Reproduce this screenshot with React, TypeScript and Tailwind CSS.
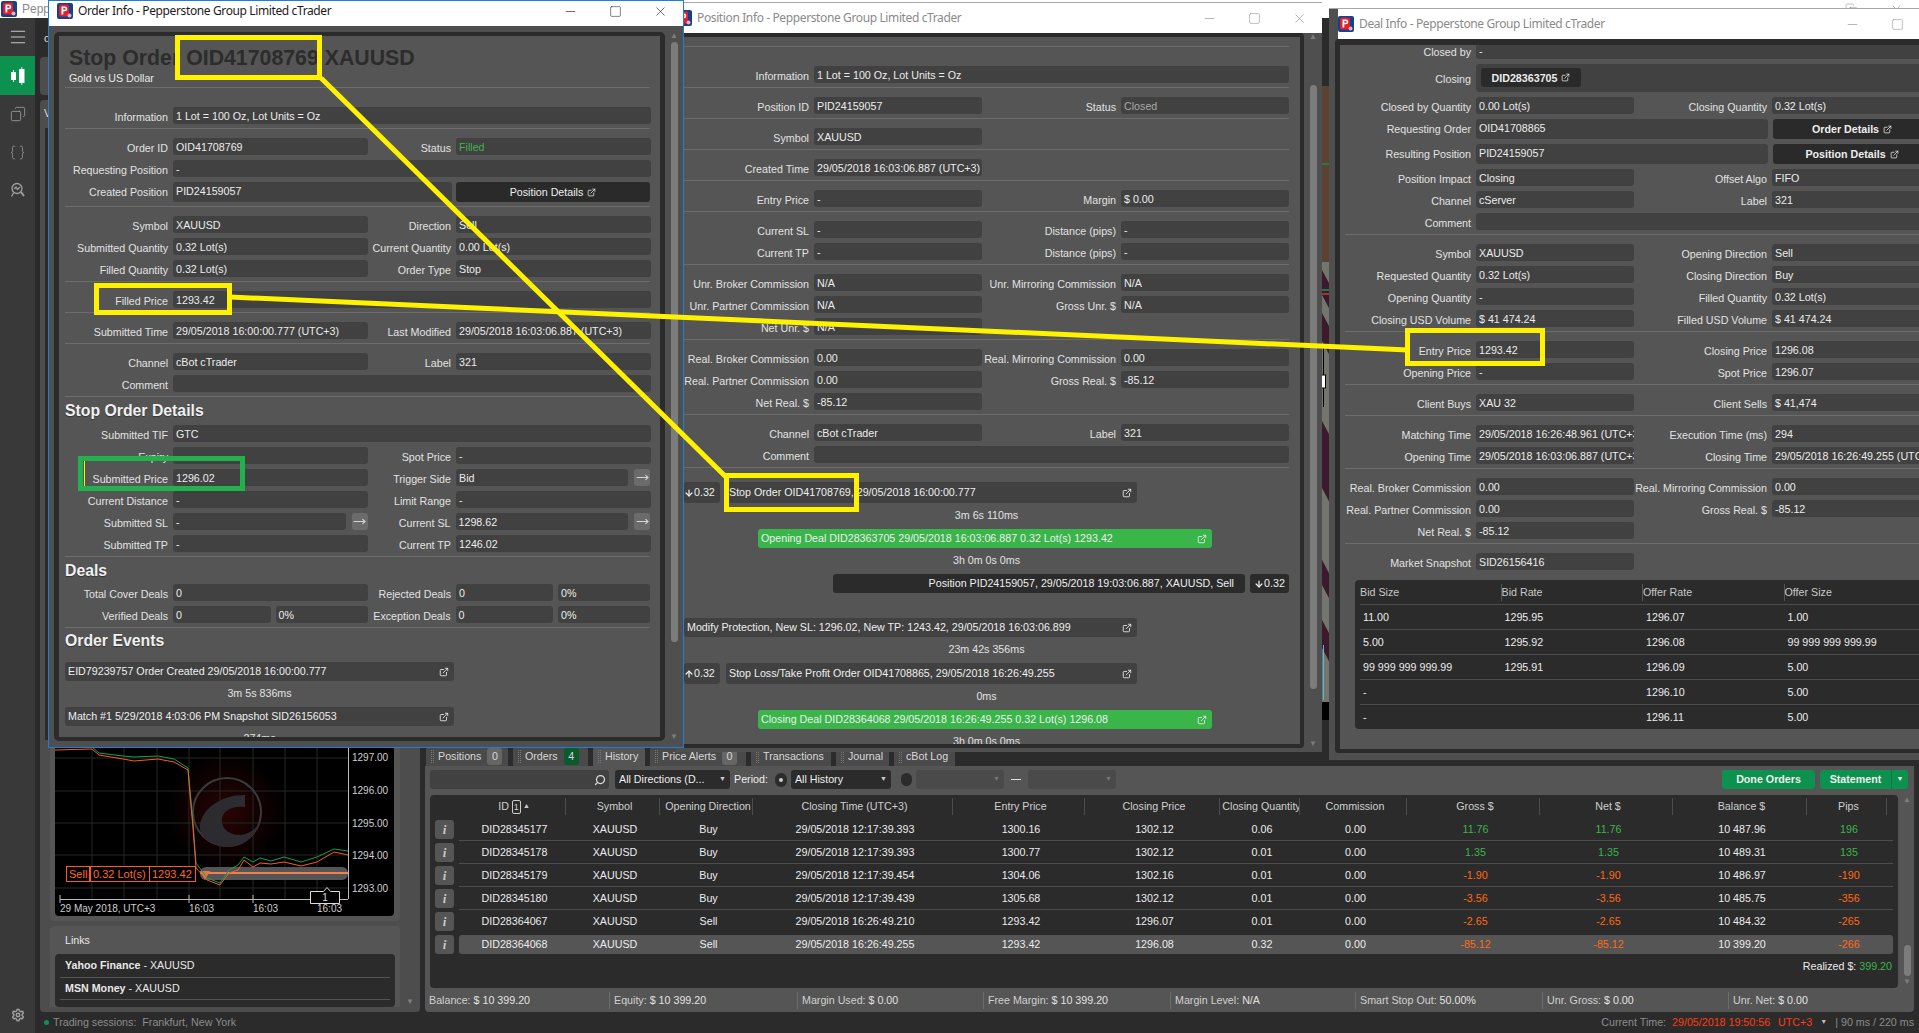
import React from 'react';
import clsx from 'clsx';
import { Minus, Square, X, Copy, Menu, Braces, Settings, ExternalLink, MoveRight, ArrowDown, ArrowUp, Search } from 'lucide-react';

type Layout = { l1: string; f1: string; l2: string; f2: string; full: string };
const ORDER: Layout = { l1: 'w-[103px]', f1: 'w-[195px]', l2: 'w-[83px]', f2: 'w-[195px]', full: 'w-[478px]' };
const POSITION: Layout = { l1: 'w-[125px]', f1: 'w-[168px]', l2: 'w-[134px]', f2: 'w-[168px]', full: 'w-[475px]' };
const DEAL: Layout = { l1: 'w-[126px]', f1: 'w-[158px]', l2: 'w-[133px]', f2: 'w-[158px]', full: 'w-[455px]' };

function Logo() {
  return (
    <svg viewBox="0 0 16 16" className="w-4 h-4 shrink-0">
      <rect width="16" height="16" rx="2" fill="#12418f" />
      <rect x="2" y="1.5" width="10" height="12" rx="1.5" fill="#e3202c" />
      <path d="M4.5 3.5h3.4a2.4 2.4 0 0 1 0 4.8H6.3v3.2H4.5z M6.3 5v1.8h1.4a.9.9 0 0 0 0-1.8z" fill="#fff" fillRule="evenodd" />
      <circle cx="12.5" cy="12.5" r="2" fill="#f3b0b0" />
    </svg>
  );
}

function Label({ className, children }: { className: string; children?: React.ReactNode }) {
  return <div className={clsx('shrink-0 text-right whitespace-nowrap text-[#e2e2e2] pt-[2px] leading-[17px]', className)}>{children}</div>;
}

function Field({ className, children, h = 'h-[17px]' }: { className?: string; children?: React.ReactNode; h?: string }) {
  return (
    <div className={clsx('shrink-0 overflow-hidden whitespace-nowrap rounded-[3px] bg-[#414141] pl-[3px] leading-[18px] text-[#ececec]', h, className)}>
      {children}
    </div>
  );
}

function ArrowBtn() {
  return (
    <div className="ml-[6px] flex h-[17px] w-[16px] shrink-0 items-center justify-center rounded-[3px] bg-[#6b6b6b]">
      <MoveRight size={13} className="text-[#d5d5d5]" />
    </div>
  );
}

type RowProps = {
  w: Layout;
  a: string;
  b?: React.ReactNode;
  c?: string;
  d?: React.ReactNode;
  full?: boolean;
  bArrow?: boolean;
  dArrow?: boolean;
  bSplit?: string;
  dSplit?: string;
};

function Row({ w, a, b, c, d, full, bArrow, dArrow, bSplit, dSplit }: RowProps) {
  return (
    <div className="flex h-[17px]">
      <Label className={w.l1}>{a}</Label>
      <div className="ml-[5px]" />
      {full ? (
        <Field className={w.full}>{b}</Field>
      ) : bArrow ? (
        <div className={clsx('flex', w.f1)}>
          <Field className="flex-1">{b}</Field>
          <ArrowBtn />
        </div>
      ) : bSplit ? (
        <div className={clsx('flex gap-[5px]', w.f1)}>
          <Field className="flex-1">{b}</Field>
          <Field className="w-[92px]">{bSplit}</Field>
        </div>
      ) : (
        <Field className={w.f1}>{b}</Field>
      )}
      {c && <Label className={w.l2}>{c}</Label>}
      {c && <div className="ml-[5px]" />}
      {c &&
      (dArrow ? (
        <div className={clsx('flex', w.f2)}>
          <Field className="flex-1">{d}</Field>
          <ArrowBtn />
        </div>
      ) : dSplit ? (
        <div className={clsx('flex gap-[5px]', w.f2)}>
          <Field className="flex-1">{d}</Field>
          <Field className="w-[92px]">{dSplit}</Field>
        </div>
      ) : (
        <Field className={w.f2}>{d}</Field>
      ))}
    </div>
  );
}

function Section({ children, first, last }: { children: React.ReactNode; first?: boolean; last?: boolean }) {
  return (
    <div className={clsx('flex flex-col gap-[5px] pb-[4px]', first ? 'pt-[19px]' : 'pt-[9px]', !last && 'border-b border-[#6c6c6c]')}>
      {children}
    </div>
  );
}

function TitleBar({ title, inactive, h }: { title: string; inactive?: boolean; h: string }) {
  const tone = inactive ? 'text-[#8a8a8a]' : 'text-[#1c1c1c]';
  return (
    <div className={clsx('flex shrink-0 items-center bg-white', h)}>
      <Logo />
      <div className={clsx('ml-[5px] flex-1 whitespace-nowrap text-[12px] font-[Noto_Sans] tracking-[-0.38px]', tone)}>{title}</div>
      {[Minus, Square, X].map((Icon, i) =>
      <div key={i} className={clsx('flex h-full w-[45px] items-center justify-center', tone)}>
          <Icon size={i === 1 ? 13 : 15} strokeWidth={1} />
        </div>
      )}
    </div>
  );
}

function Scroll({ className, thumb }: { className: string; thumb: string }) {
  return (
    <div className={clsx('flex w-[19px] flex-col items-center text-[8px] leading-[8px] text-[#7d7d7d]', className)}>
      <span>▲</span>
      <div className={clsx('w-[7px] rounded-full bg-[#7c7c7c]', thumb)} />
      <div className="flex-1" />
      <span>▼</span>
    </div>
  );
}

function EventBox({ children, className }: { children: React.ReactNode; className: string }) {
  return (
    <div className={clsx('flex h-[19px] shrink-0 items-center rounded-[3px] pl-[3px] pr-[5px] whitespace-nowrap', className)}>
      <span className="flex-1">{children}</span>
      <ExternalLink size={10} strokeWidth={2} />
    </div>
  );
}

function Gap({ children }: { children: string }) {
  return <div className="h-[26px] shrink-0 text-center leading-[25px] text-[#e2e2e2]">{children}</div>;
}

function Heading({ h, children }: { h: string; children: string }) {
  return <div className={clsx('flex items-center text-[15.8px] font-bold text-[#f0f0f0] [text-shadow:0_1px_1px_#333]', h)}>{children}</div>;
}

function OrderWindow() {
  const w = ORDER;
  return (
    <div className="absolute left-[48px] top-0 z-30 flex h-[748px] w-[636px] flex-col border border-[#1f7fd6] bg-[#4f4f4f]">
      <div className="bg-white pb-[5px] pl-[8px]"><TitleBar title="Order Info - Pepperstone Group Limited cTrader" h="h-[20px]" /></div>
      <div className="flex min-h-0 flex-1 bg-[#4f4f4f] pl-[5px] pt-[6px]">
        <div className="h-[709px] w-[611px] shrink-0 overflow-hidden rounded-[5px] border-x-[5px] border-y-[4px] border-[#2b2b2b] bg-[#555555]">
          <div className="pl-[6px] pr-[10px]">
            <div className="h-[52px] border-b border-[#6c6c6c] pl-[4px] pt-[10px]">
              <div className="whitespace-nowrap text-[21.3px] font-bold leading-[24px] text-[#2c2c2c]">Stop Order OID41708769 XAUUSD</div>
              <div className="mt-[1px] leading-[14px] text-[#e8e8e8]">Gold vs US Dollar</div>
            </div>
            <Section first><Row w={w} full a="Information" b="1 Lot = 100 Oz, Lot Units = Oz" /></Section>
            <Section>
              <Row w={w} a="Order ID" b="OID41708769" c="Status" d={<span className="text-[#3fb54b]">Filled</span>} />
              <Row w={w} full a="Requesting Position" b="-" />
              <div className="flex h-[20px]">
                <Label className={w.l1}>Created Position</Label>
                <div className="ml-[5px]" />
                <Field className="w-[279px]" h="h-[20px]">PID24159057</Field>
                <div className="ml-[4px] flex h-[20px] w-[195px] items-center justify-center gap-[4px] rounded-[3px] bg-[#2a2a2a] text-[#eee]">
                  Position Details <ExternalLink size={9} />
                </div>
              </div>
            </Section>
            <Section>
              <Row w={w} a="Symbol" b="XAUUSD" c="Direction" d="Sell" />
              <Row w={w} a="Submitted Quantity" b="0.32 Lot(s)" c="Current Quantity" d="0.00 Lot(s)" />
              <Row w={w} a="Filled Quantity" b="0.32 Lot(s)" c="Order Type" d="Stop" />
            </Section>
            <Section><Row w={w} full a="Filled Price" b="1293.42" /></Section>
            <Section><Row w={w} a="Submitted Time" b="29/05/2018 16:00:00.777 (UTC+3)" c="Last Modified" d="29/05/2018 16:03:06.887 (UTC+3)" /></Section>
            <Section>
              <Row w={w} a="Channel" b="cBot cTrader" c="Label" d="321" />
              <Row w={w} full a="Comment" />
            </Section>
            <Heading h="h-[28px]">Stop Order Details</Heading>
            <div className="flex flex-col gap-[5px] border-b border-[#6c6c6c] pb-[4px]">
              <Row w={w} full a="Submitted TIF" b="GTC" />
              <Row w={w} a="Expiry" b="-" c="Spot Price" d="-" />
              <Row w={w} a="Submitted Price" b="1296.02" c="Trigger Side" d="Bid" dArrow />
              <Row w={w} a="Current Distance" b="-" c="Limit Range" d="-" />
              <Row w={w} a="Submitted SL" b="-" bArrow c="Current SL" d="1298.62" dArrow />
              <Row w={w} a="Submitted TP" b="-" c="Current TP" d="1246.02" />
            </div>
            <Heading h="h-[27px]">Deals</Heading>
            <div className="flex flex-col gap-[5px] border-b border-[#6c6c6c] pb-[4px]">
              <Row w={w} a="Total Cover Deals" b="0" c="Rejected Deals" d="0" dSplit="0%" />
              <Row w={w} a="Verified Deals" b="0" bSplit="0%" c="Exception Deals" d="0" dSplit="0%" />
            </div>
            <div className="h-[26px]"><Heading h="h-[26px]">Order Events</Heading></div>
            <div className="mt-[8px] flex w-[389px] flex-col text-[#eee]">
              <EventBox className="bg-[#414141]">EID79239757 Order Created 29/05/2018 16:00:00.777</EventBox>
              <Gap>3m 5s 836ms</Gap>
              <EventBox className="bg-[#414141]">Match #1 5/29/2018 4:03:06 PM Snapshot SID26156053</EventBox>
              <Gap>274ms</Gap>
            </div>
          </div>
        </div>
        <Scroll className="h-[709px]" thumb="mt-[2px] h-[600px]" />
      </div>
    </div>
  );
}

function PositionWindow() {
  const w = POSITION;
  return (
    <div className="absolute left-[676px] top-[2px] z-20 flex h-[750px] w-[646px] flex-col border-t border-[#a8a8a8] bg-[#4f4f4f]">
      <TitleBar inactive title="Position Info - Pepperstone Group Limited cTrader" h="h-[30px]" />
      <div className="flex min-h-0 flex-1">
        <div className="h-[715px] w-[628px] shrink-0 overflow-hidden rounded-[4px] border-y-[4px] border-r-[4px] border-[#2b2b2b] bg-[#555555] pl-[8px]">
          <div className="w-[605px]">
            <div className="h-[10px] border-b border-[#6c6c6c]" />
            <Section first><Row w={w} full a="Information" b="1 Lot = 100 Oz, Lot Units = Oz" /></Section>
            <Section><Row w={w} a="Position ID" b="PID24159057" c="Status" d={<span className="text-[#a9a9a9]">Closed</span>} /></Section>
            <Section><Row w={w} a="Symbol" b="XAUUSD" /></Section>
            <Section><Row w={w} a="Created Time" b="29/05/2018 16:03:06.887 (UTC+3)" /></Section>
            <Section><Row w={w} a="Entry Price" b="-" c="Margin" d="$ 0.00" /></Section>
            <Section>
              <Row w={w} a="Current SL" b="-" c="Distance (pips)" d="-" />
              <Row w={w} a="Current TP" b="-" c="Distance (pips)" d="-" />
            </Section>
            <Section>
              <Row w={w} a="Unr. Broker Commission" b="N/A" c="Unr. Mirroring Commission" d="N/A" />
              <Row w={w} a="Unr. Partner Commission" b="N/A" c="Gross Unr. $" d="N/A" />
              <Row w={w} a="Net Unr. $" b="N/A" />
            </Section>
            <Section>
              <Row w={w} a="Real. Broker Commission" b="0.00" c="Real. Mirroring Commission" d="0.00" />
              <Row w={w} a="Real. Partner Commission" b="0.00" c="Gross Real. $" d="-85.12" />
              <Row w={w} a="Net Real. $" b="-85.12" />
            </Section>
            <Section>
              <Row w={w} a="Channel" b="cBot cTrader" c="Label" d="321" />
              <Row w={w} full a="Comment" />
            </Section>
            <div className="flex flex-col pt-[14px] text-[#eee]">
              <div className="flex gap-[6px]">
                <div className="flex h-[21px] w-[36px] items-center rounded-[3px] bg-[#414141] pr-[3px]"><ArrowDown size={10} strokeWidth={3} />0.32</div>
                <EventBox className="h-[21px] w-[411px] bg-[#414141]">Stop Order OID41708769, 29/05/2018 16:00:00.777</EventBox>
              </div>
              <Gap>3m 6s 110ms</Gap>
              <EventBox className="ml-[74px] w-[454px] bg-[#39b54a]">Opening Deal DID28363705 29/05/2018 16:03:06.887 0.32 Lot(s) 1293.42</EventBox>
              <Gap>3h 0m 0s 0ms</Gap>
              <div className="flex justify-end gap-[5px]">
                <div className="flex h-[19px] w-[412px] items-center justify-end rounded-[3px] bg-[#2b2b2b] pr-[11px]">Position PID24159057, 29/05/2018 19:03:06.887, XAUUSD, Sell</div>
                <div className="flex h-[19px] w-[39px] items-center justify-center rounded-[3px] bg-[#2b2b2b]"><ArrowDown size={10} strokeWidth={3} />0.32</div>
              </div>
              <div className="h-[25px]" />
              <EventBox className="w-[453px] bg-[#414141]">Modify Protection, New SL: 1296.02, New TP: 1243.42, 29/05/2018 16:03:06.899</EventBox>
              <Gap>23m 42s 356ms</Gap>
              <div className="flex gap-[6px]">
                <div className="flex h-[21px] w-[36px] items-center rounded-[3px] bg-[#414141] pr-[3px]"><ArrowUp size={10} strokeWidth={3} />0.32</div>
                <EventBox className="h-[21px] w-[411px] bg-[#414141]">Stop Loss/Take Profit Order OID41708865, 29/05/2018 16:26:49.255</EventBox>
              </div>
              <Gap>0ms</Gap>
              <EventBox className="ml-[74px] w-[454px] bg-[#39b54a]">Closing Deal DID28364068 29/05/2018 16:26:49.255 0.32 Lot(s) 1296.08</EventBox>
              <Gap>3h 0m 0s 0ms</Gap>
            </div>
          </div>
        </div>
        <Scroll className="h-[715px]" thumb="mt-[44px] h-[604px]" />
      </div>
    </div>
  );
}

function DealWindow() {
  const w = DEAL;
  const rows = [
    ['11.00', '1295.95', '1296.07', '1.00'],
    ['5.00', '1295.92', '1296.08', '99 999 999 999.99'],
    ['99 999 999 999.99', '1295.91', '1296.09', '5.00'],
    ['-', '', '1296.10', '5.00'],
    ['-', '', '1296.11', '5.00']];
  return (
    <div className="absolute left-[1329px] top-[8px] z-10 flex h-[752px] w-[636px] flex-col border-t border-[#a8a8a8] bg-[#4f4f4f]">
      <div className="pl-[9px]"><TitleBar inactive title="Deal Info - Pepperstone Group Limited cTrader" h="h-[30px]" /></div>
      <div className="flex-1 pl-[6px]">
        <div className="h-[714px] overflow-hidden rounded-[4px] border-y-[6px] border-b-[4px] border-l-[5px] border-[#2b2b2b] bg-[#555555] pl-[5px]">
          <div className="-mt-[3px] flex flex-col gap-[5px]">
            <Row w={w} full a="Closed by" b="-" />
            <div className="flex h-[28px]">
              <Label className={clsx(w.l1, 'pt-[7px]')}>Closing</Label>
              <div className="ml-[5px]" />
              <Field className={w.full} h="h-[28px]">
                <div className="ml-[2px] mt-[4px] flex h-[19px] w-[100px] items-center justify-center gap-[4px] rounded-[3px] bg-[#2a2a2a] font-bold">
                  DID28363705 <ExternalLink size={9} />
                </div>
              </Field>
            </div>
            <Row w={w} a="Closed by Quantity" b="0.00 Lot(s)" c="Closing Quantity" d="0.32 Lot(s)" />
            <div className="flex h-[20px]">
              <Label className={w.l1}>Requesting Order</Label>
              <div className="ml-[5px]" />
              <Field className="w-[292px]" h="h-[20px]">OID41708865</Field>
              <div className="ml-[5px] flex h-[20px] w-[158px] items-center justify-center gap-[4px] rounded-[3px] bg-[#2a2a2a] font-bold text-[#eee]">Order Details <ExternalLink size={9} /></div>
            </div>
            <div className="flex h-[20px]">
              <Label className={w.l1}>Resulting Position</Label>
              <div className="ml-[5px]" />
              <Field className="w-[292px]" h="h-[20px]">PID24159057</Field>
              <div className="ml-[5px] flex h-[20px] w-[158px] items-center justify-center gap-[4px] rounded-[3px] bg-[#2a2a2a] font-bold text-[#eee]">Position Details <ExternalLink size={9} /></div>
            </div>
            <Row w={w} a="Position Impact" b="Closing" c="Offset Algo" d="FIFO" />
            <Row w={w} a="Channel" b="cServer" c="Label" d="321" />
            <Row w={w} full a="Comment" />
          </div>
          <div className="mt-[4px] border-t border-[#6c6c6c]" />
          <Section>
            <Row w={w} a="Symbol" b="XAUUSD" c="Opening Direction" d="Sell" />
            <Row w={w} a="Requested Quantity" b="0.32 Lot(s)" c="Closing Direction" d="Buy" />
            <Row w={w} a="Opening Quantity" b="-" c="Filled Quantity" d="0.32 Lot(s)" />
            <Row w={w} a="Closing USD Volume" b="$ 41 474.24" c="Filled USD Volume" d="$ 41 474.24" />
          </Section>
          <Section>
            <Row w={w} a="Entry Price" b="1293.42" c="Closing Price" d="1296.08" />
            <Row w={w} a="Opening Price" b="-" c="Spot Price" d="1296.07" />
          </Section>
          <Section><Row w={w} a="Client Buys" b="XAU 32" c="Client Sells" d="$ 41,474" /></Section>
          <Section>
            <Row w={w} a="Matching Time" b="29/05/2018 16:26:48.961 (UTC+3)" c="Execution Time (ms)" d="294" />
            <Row w={w} a="Opening Time" b="29/05/2018 16:03:06.887 (UTC+3)" c="Closing Time" d="29/05/2018 16:26:49.255 (UTC+3)" />
          </Section>
          <Section>
            <Row w={w} a="Real. Broker Commission" b="0.00" c="Real. Mirroring Commission" d="0.00" />
            <Row w={w} a="Real. Partner Commission" b="0.00" c="Gross Real. $" d="-85.12" />
            <Row w={w} a="Net Real. $" b="-85.12" />
          </Section>
          <Section last><Row w={w} a="Market Snapshot" b="SID26156416" /></Section>
          <div className="ml-[10px] mt-[6px] w-[600px] rounded-[4px] bg-[#2b2b2b] pl-[5px]">
            <div className="grid h-[24px] grid-cols-[141.5px_141.5px_141.5px_141.5px] items-center text-[#c8c8c8]">
              {['Bid Size', 'Bid Rate', 'Offer Rate', 'Offer Size'].map((t, i) =>
              <div key={t} className={clsx('flex h-[17px] items-center', i > 0 && '-ml-[1px] border-l border-[#555]')}>{t}</div>
              )}
            </div>
            {rows.map((r, i) =>
            <div key={i} className="grid h-[25px] grid-cols-[141.5px_141.5px_141.5px_141.5px] items-center border-t border-[#4c4c4c] pl-[3px] text-[#ececec]">
                {r.map((v, j) => <div key={j}>{v}</div>)}
              </div>
            )}
          </div>
        </div>
      </div>
    </div>
  );
}

function Chart() {
  const green = '55,747 92,747 99,753 123,756 134,757 158,756 174,759 188,768 190,790 193,823 196,863 207,878 220,883 229,870 238,865 244,857 253,862 260,858 271,861 284,857 301,862 317,857 334,849 348,851';
  const orange = '55,750 92,749 99,755 123,759 134,761 158,759 174,762 188,770 190,795 193,828 196,868 207,880 220,885 229,873 238,870 244,860 253,867 260,863 271,864 284,862 301,866 317,862 334,852 348,855';
  return (
    <svg viewBox="55 740 339 176" className="h-[176px] w-[339px] rounded-b-[4px] bg-black">
      <defs>
        <radialGradient id="glow">
          <stop offset="0%" stopColor="#2a0404" />
          <stop offset="100%" stopColor="#000" />
        </radialGradient>
      </defs>
      <circle cx="226" cy="812" r="60" fill="url(#glow)" />
      {[92, 124, 157, 189, 220, 253, 285, 317].map((x) => <line key={x} x1={x} x2={x} y1="740" y2="899" stroke="#262626" />)}
      {[758, 791, 823, 855, 888].map((y) => <line key={y} x1="55" x2="348" y1={y} y2={y} stroke="#262626" />)}
      <circle cx="227" cy="812" r="34" fill="none" stroke="#3a3a3c" strokeWidth="2" />
      <path d="M245 795C215 795 198 815 200 830C205 845 225 850 240 845C250 840 258 830 260 822C250 838 232 838 224 828C217 815 228 805 245 807Z" fill="#2c2c30" />
      <rect x="200" y="867" width="148" height="13" rx="6" fill="#555" />
      <line x1="200" x2="348" y1="873" y2="873" stroke="#f08050" strokeWidth="2" />
      <path d="M200 871h10l-5 9z" fill="#e8764a" />
      <polyline points={green} fill="none" stroke="#12a150" strokeWidth="1" />
      <polyline points={orange} fill="none" stroke="#ff5a1e" strokeWidth="1" />
      <rect x="66.5" y="866.5" width="129" height="15" fill="#000" stroke="#ff5a1e" />
      <line x1="90" x2="90" y1="866" y2="882" stroke="#ff5a1e" strokeWidth="2" />
      <line x1="149.5" x2="149.5" y1="866" y2="882" stroke="#ff5a1e" />
      <g fontSize="11" fill="#ff6a2a" fontFamily="Liberation Sans">
        <text x="69" y="878">Sell</text>
        <text x="93" y="878">0.32 Lot(s)</text>
        <text x="152" y="878">1293.42</text>
      </g>
      <line x1="348.5" x2="348.5" y1="740" y2="899" stroke="#bbb" />
      <line x1="60" x2="348" y1="899.5" y2="899.5" stroke="#bbb" />
      {[60, 189, 253, 317].map((x) => <line key={x} x1={x} x2={x} y1="895" y2="903" stroke="#bbb" />)}
      <g fontSize="10" fill="#cfcfcf" fontFamily="Liberation Sans">
        {[['1297.00', 761], ['1296.00', 794], ['1295.00', 827], ['1294.00', 859], ['1293.00', 892]].map(([t, y]) =>
        <text key={t} x="352" y={y}>{t}</text>
        )}
        <text x="60" y="912">29 May 2018, UTC+3</text>
        <text x="189" y="912">16:03</text>
        <text x="253" y="912">16:03</text>
        <text x="317" y="912">16:03</text>
      </g>
      <path d="M310.5 891.5h13l3.5-4 3.5 4h9v12h-29z" fill="#000" stroke="#ddd" />
      <text x="325" y="901" fontSize="10" fill="#ddd" textAnchor="middle" fontFamily="Liberation Sans">1</text>
    </svg>
  );
}

function LeftColumn() {
  return (
    <div className="ml-[5px] flex w-[380px] shrink-0 flex-col">
      <div className="h-[39px] pl-[4px] pt-[13px] leading-[14px] text-[#ddd]">o</div>
      <div className="h-[38px] rounded-[4px] bg-[#4d4d4d]" />
      <div className="mt-[5px] flex min-h-0 flex-1 flex-col rounded-[4px] bg-[#4d4d4d] pb-[5px] pl-[10px]">
        <div className="h-[28px] -ml-[6px] pt-[6px] leading-[14px] text-[#ddd]">V</div>
        <div className="-ml-[5px] min-h-0 flex-1 bg-[#2b2b2b]" />
        <div className="mb-[5px] h-[181px] w-[350px] rounded-[4px] bg-[#555555] px-[5px] pb-[5px]"><Chart /></div>
        <div className="flex items-end">
          <div className="h-[81px] w-[350px] overflow-hidden rounded-t-[4px] bg-[#555555] px-[5px]">
            <div className="flex h-[28px] items-center pl-[10px] text-[#e8e8e8]">Links</div>
            <div className="h-[53px] rounded-[4px] bg-[#2b2b2b] px-[5px] text-[#e8e8e8]">
              <div className="flex h-[24px] items-center border-b border-[#555] pl-[5px]"><b>Yahoo Finance</b>&nbsp;- XAUUSD</div>
              <div className="flex h-[22px] items-center border-b border-[#555] pl-[5px]"><b>MSN Money</b>&nbsp;- XAUUSD</div>
            </div>
          </div>
          <div className="w-[20px] text-center text-[8px] leading-[10px] text-[#7d7d7d]">▼</div>
        </div>
      </div>
    </div>
  );
}

const GRID = 'grid grid-cols-[107px_94px_93px_200px_132px_135px_80px_107px_133px_133px_134px_80px]';
const G = 'text-[#3cb54a]';
const O = 'text-[#ff6a13]';
const HISTORY = [
  ['DID28345177', 'Buy', '29/05/2018 12:17:39.393', '1300.16', '1302.12', '0.06', '11.76', '10 487.96', '196', G],
  ['DID28345178', 'Buy', '29/05/2018 12:17:39.393', '1300.77', '1302.12', '0.01', '1.35', '10 489.31', '135', G],
  ['DID28345179', 'Buy', '29/05/2018 12:17:39.454', '1304.06', '1302.16', '0.01', '-1.90', '10 486.97', '-190', O],
  ['DID28345180', 'Buy', '29/05/2018 12:17:39.439', '1305.68', '1302.12', '0.01', '-3.56', '10 485.75', '-356', O],
  ['DID28364067', 'Sell', '29/05/2018 16:26:49.210', '1293.42', '1296.07', '0.01', '-2.65', '10 484.32', '-265', O],
  ['DID28364068', 'Sell', '29/05/2018 16:26:49.255', '1293.42', '1296.08', '0.32', '-85.12', '10 399.20', '-266', O]];

function Tab({ w, label, badge, active, green }: { w: string; label: string; badge?: string; active?: boolean; green?: boolean }) {
  return (
    <div className={clsx('flex h-[19px] shrink-0 items-center rounded-t-[3px] pl-[5px] text-[#d8d8d8]', w, active ? 'bg-[#555555]' : 'bg-[#4a4a4a]')}>
      <span className="mr-[4px] h-[13px] w-[3px] border-x border-dotted border-[#777]" />
      {label}
      {badge &&
      <span className={clsx('ml-[6px] flex h-[17px] w-[15px] items-center justify-center rounded-[3px]', green ? 'bg-[#0b5a2f]' : 'bg-[#666]')}>{badge}</span>
      }
    </div>
  );
}

function Select({ w, label, dim }: { w: string; label?: string; dim?: boolean }) {
  return (
    <div className={clsx('flex h-[19px] shrink-0 items-center justify-between rounded-[3px] pl-[4px] pr-[4px] text-[#eee]', w, dim ? 'bg-[#4a4a4a]' : 'bg-[#2b2b2b]')}>
      <span className="whitespace-nowrap">{label}</span>
      <span className={clsx('text-[7px]', dim ? 'text-[#777]' : 'text-[#ccc]')}>▼</span>
    </div>
  );
}

function RightColumn() {
  const status = [
    ['w-[185px]', 'Balance:', '$ 10 399.20'],
    ['w-[188px]', 'Equity:', '$ 10 399.20'],
    ['w-[186px]', 'Margin Used:', '$ 0.00'],
    ['w-[187px]', 'Free Margin:', '$ 10 399.20'],
    ['w-[185px]', 'Margin Level:', 'N/A'],
    ['w-[187px]', 'Smart Stop Out:', '50.00%'],
    ['w-[186px]', 'Unr. Gross:', '$ 0.00'],
    ['w-[180px]', 'Unr. Net:', '$ 0.00']];
  const head = ['ID', 'Symbol', 'Opening Direction', 'Closing Time (UTC+3)', 'Entry Price', 'Closing Price', 'Closing Quantity', 'Commission', 'Gross $', 'Net $', 'Balance $', 'Pips'];
  return (
    <div className="ml-[5px] flex w-[1489px] shrink-0 flex-col justify-end">
      <div className="flex h-[19px] gap-[5px] bg-[#2b2b2b] pl-px">
        <Tab w="w-[82px]" label="Positions" badge="0" />
        <Tab w="w-[75px]" label="Orders" badge="4" green />
        <Tab w="w-[52px]" label="History" active />
        <Tab w="w-[96px]" label="Price Alerts" badge="0" />
        <Tab w="w-[80px]" label="Transactions" />
        <Tab w="w-[53px]" label="Journal" />
        <Tab w="w-[61px]" label="cBot Log" />
      </div>
      <div className="rounded-b-[4px] bg-[#555555]">
        <div className="flex h-[27px] items-center px-[5px] text-[#eee]">
          <div className="flex h-[19px] w-[179px] items-center justify-end rounded-[3px] bg-[#414141] pr-[3px]">
            <Search size={12} strokeWidth={2.5} className="-scale-x-100 text-[#ddd]" />
          </div>
          <div className="ml-[6px]"><Select w="w-[115px]" label="All Directions (D..." /></div>
          <span className="ml-[4px]">Period:</span>
          <span className="ml-[7px] flex h-[14px] w-[12px] items-center justify-center rounded-full bg-[#2b2b2b]"><span className="h-[4px] w-[4px] rounded-full bg-[#ccc]" /></span>
          <div className="ml-[4px]"><Select w="w-[100px]" label="All History" /></div>
          <span className="ml-[10px] h-[13px] w-[11px] rounded-full bg-[#2b2b2b]" />
          <div className="ml-[4px]"><Select w="w-[88px]" dim /></div>
          <span className="mx-[7px] h-px w-[10px] bg-[#ddd]" />
          <Select w="w-[88px]" dim />
          <div className="flex-1" />
          <div className="mr-[5px] flex h-[19px] w-[93px] items-center justify-center rounded-[3px] bg-[#0d914f] font-bold text-[#eee]">Done Orders</div>
          <div className="mr-[1px] flex h-[19px] w-[88px] items-center rounded-[3px] bg-[#0d914f] font-bold text-[#eee]">
            <span className="flex-1 text-center">Statement</span>
            <span className="flex h-full w-[17px] items-center justify-center border-l border-[#0a7a42] text-[7px]">▼</span>
          </div>
        </div>
        <div className="flex h-[195px] pl-[5px] pt-[2px]">
          <div className="w-[1468px] rounded-[4px] bg-[#2b2b2b] pl-[5px] text-[#ececec]">
            <div className="ml-[24px] h-[23px] pt-[3px] text-[#cfcfcf]">
              <div className={GRID}>
                {head.map((h, i) =>
                <div key={h} className="flex h-[17px] items-center justify-center overflow-hidden whitespace-nowrap border-r border-[#4c4c4c] pl-[4px]">
                    {h}
                    {i === 0 && <span className="ml-[3px] rounded-[2px] border border-[#ccc] px-[1px] text-[9px] leading-[12px]">1</span>}
                    {i === 0 && <span className="ml-[2px] text-[7px]">▲</span>}
                  </div>
                )}
              </div>
            </div>
            {HISTORY.map((r, i) => {
              const tone = r[9];
              const sel = i === 5;
              return (
                <div key={r[0]} className="flex h-[23px] items-center">
                  <div className="flex h-[19px] w-[19px] shrink-0 items-center justify-center rounded-[3px] bg-[#555] font-[Liberation_Serif] text-[13px] font-bold italic text-[#c8c8c8]">i</div>
                  <div className={clsx('ml-[5px] flex h-full w-[1434px] items-center', !sel && i < 4 && 'border-b border-[#4c4c4c]')}>
                    <div className={clsx(GRID, 'h-[19px] w-full items-center rounded-[3px] text-center', sel && 'bg-[#555]')}>
                      <div className="pl-[4px]">{r[0]}</div>
                      <div className="pl-[4px]">XAUUSD</div>
                      <div className="pl-[4px]">{r[1]}</div>
                      <div className="pl-[4px]">{r[2]}</div>
                      <div className="pl-[4px]">{r[3]}</div>
                      <div className="pl-[4px]">{r[4]}</div>
                      <div className="pl-[4px]">{r[5]}</div>
                      <div className="pl-[4px]">0.00</div>
                      <div className={clsx('pl-[4px]', tone)}>{r[6]}</div>
                      <div className={clsx('pl-[4px]', tone)}>{r[6]}</div>
                      <div className="pl-[4px]">{r[7]}</div>
                      <div className={clsx('pl-[4px]', tone)}>{r[8]}</div>
                    </div>
                  </div>
                </div>
              );
            })}
            <div className="flex h-[20px] items-center justify-end pr-[6px]">
              Realized $:&nbsp;<span className={G}>399.20</span>
            </div>
          </div>
          <div className="ml-[3px] flex w-[12px] flex-col items-center text-[8px] leading-[8px] text-[#7d7d7d]">
            <span className="mt-[1px]">▲</span>
            <div className="flex-1" />
            <div className="mb-[2px] h-[31px] w-[7px] rounded-full bg-[#7c7c7c]" />
            <span className="mb-[2px]">▼</span>
          </div>
        </div>
        <div className="flex h-[24px] items-center text-[#e2e2e2]">
          {status.map(([w, a, b], i) =>
          <div key={a} className={clsx('flex h-[17px] items-center whitespace-nowrap pl-[4px]', w, i < 7 && 'border-r border-[#6c6c6c]')}>
              <span className="text-[#d0d0d0]">{a}</span>&nbsp;{b}
            </div>
          )}
        </div>
      </div>
    </div>
  );
}

function Sidebar() {
  return (
    <div className="flex w-[35px] shrink-0 flex-col items-center bg-[#393939] text-[#a0a0a0]">
      <div className="flex h-[38px] items-center"><Menu size={20} strokeWidth={1.25} className="text-[#c8c8c8]" /></div>
      <div className="flex h-[39px] w-full items-center justify-center bg-[#0d914f]">
        <svg viewBox="0 0 14 18" className="h-[18px] w-[14px] text-white" fill="currentColor">
          <rect x="0" y="5" width="5" height="8" rx="0.5" />
          <rect x="2.1" y="3" width="0.8" height="12" />
          <rect x="8" y="2" width="5.5" height="14" rx="0.5" />
          <rect x="10.4" y="0" width="0.8" height="18" />
        </svg>
      </div>
      <div className="flex h-[38px] items-center"><Copy size={16} strokeWidth={1.25} className="-scale-x-100" /></div>
      <div className="flex h-[39px] items-center"><Braces size={17} strokeWidth={1} /></div>
      <div className="flex h-[36px] items-center">
        <svg viewBox="0 0 16 16" className="h-[16px] w-[16px]" fill="none" stroke="currentColor" strokeWidth="1.3">
          <circle cx="7" cy="6.5" r="5" />
          <path d="M3.5 11L1.5 14.5M4 7l2-2 1.5 2.5L10 5" />
          <path d="M11 10l3 4" strokeWidth="2" />
        </svg>
      </div>
      <div className="flex-1" />
      <div className="mb-[11px]"><Settings size={14} strokeWidth={2.5} /></div>
    </div>
  );
}

function ChartSliver() {
  const bands = [[270, 295], [313, 341], [421, 488], [560, 585], [620, 648]];
  return (
    <svg viewBox="1322 86 8 634" className="absolute left-[1322px] top-[86px] z-0 h-[634px] w-[8px]">
      <rect x="1322" y="86" width="8" height="634" fill="#74756c" />
      <rect x="1322" y="86" width="8" height="176" fill="#5b4232" />
      {bands.map(([a, b]) =>
      <polygon key={a} points={`1322,${a} 1330,${a + 15} 1330,${b + 15} 1322,${b}`} fill="#3a1a2c" />
      )}
      <line x1="1322" x2="1330" y1="164" y2="164" stroke="#12a150" />
      <line x1="1322" x2="1330" y1="290" y2="290" stroke="#12a150" strokeWidth="1.5" />
      <line x1="1322" x2="1330" y1="294" y2="294" stroke="#ff5a1e" />
      <line x1="1323.5" x2="1323.5" y1="345" y2="407" stroke="#000" />
      <rect x="1321.5" y="375" width="4" height="13" fill="#fff" stroke="#000" />
      <line x1="1329.5" x2="1329.5" y1="375" y2="417" stroke="#b8b83c" />
      <line x1="1323.5" x2="1323.5" y1="645" y2="700" stroke="#56b7e6" />
      <rect x="1322" y="702" width="8" height="18" fill="#000" />
    </svg>
  );
}

function Annotations() {
  const box = 'absolute z-40 border-[5px] border-[#fff200]';
  return (
    <>
      <svg viewBox="0 0 1919 1033" className="absolute inset-0 z-40 h-[1033px] w-[1919px]" fill="none" stroke="#fff200" strokeWidth="5">
        <line x1="321" y1="78" x2="727" y2="478" />
        <line x1="230" y1="297" x2="1408" y2="350" />
      </svg>
      <div className={clsx(box, 'left-[175px] top-[35px] h-[45px] w-[147px]')} />
      <div className={clsx(box, 'left-[94px] top-[283px] h-[32px] w-[138px]')} />
      <div className={clsx(box, 'left-[724px] top-[473px] h-[39px] w-[135px]')} />
      <div className={clsx(box, 'left-[1405px] top-[328px] h-[38px] w-[140px]')} />
      <div className="absolute left-[78px] top-[456px] z-40 h-[35px] w-[167px] border-[5px] border-[#22b14c]" />
      <div className="absolute left-[84px] top-[461px] z-40 h-[25px] w-[1px] bg-[#fff200]" />
    </>
  );
}

export default function App() {
  return (
    <div className="relative flex h-[1033px] w-[1919px] flex-col overflow-hidden bg-[#2b2b2b] font-['Liberation_Sans',sans-serif] text-[10.7px]">
      <div className="flex h-[18px] shrink-0 items-center justify-between bg-white pl-[1px] text-[#8a8a8a]">
        <div className="flex items-center gap-[5px] text-[12px]"><Logo />Pepp</div>
        <div className="flex">
          {[Minus, Copy, X].map((Icon, i) =>
          <div key={i} className="flex w-[45px] justify-center"><Icon size={13} strokeWidth={1} /></div>
          )}
        </div>
      </div>
      <div className="flex min-h-0 flex-1">
        <Sidebar />
        <div className="flex min-w-0 flex-1 flex-col">
          <div className="flex h-[994px]">
            <LeftColumn />
            <RightColumn />
          </div>
          <div className="flex h-[21px] items-center pl-[9px] text-[#8c8c8c]">
            <span className="mr-[4px] h-[5px] w-[5px] rounded-full bg-[#0d914f]" />
            Trading sessions:&nbsp;&nbsp;Frankfurt, New York
            <div className="flex-1" />
            Current Time:&nbsp;&nbsp;<span className="text-[#ff3b12]">29/05/2018 19:50:56</span>
            <span className="ml-[8px] text-[#ff3b12]">UTC+3</span>
            <span className="ml-[8px] text-[7px] text-[#bbb]">▼</span>
            <span className="ml-[8px]">| 90 ms / 220 ms</span>
            <div className="w-[5px]" />
          </div>
        </div>
      </div>
      <ChartSliver />
      <DealWindow />
      <PositionWindow />
      <OrderWindow />
      <Annotations />
    </div>
  );
}
